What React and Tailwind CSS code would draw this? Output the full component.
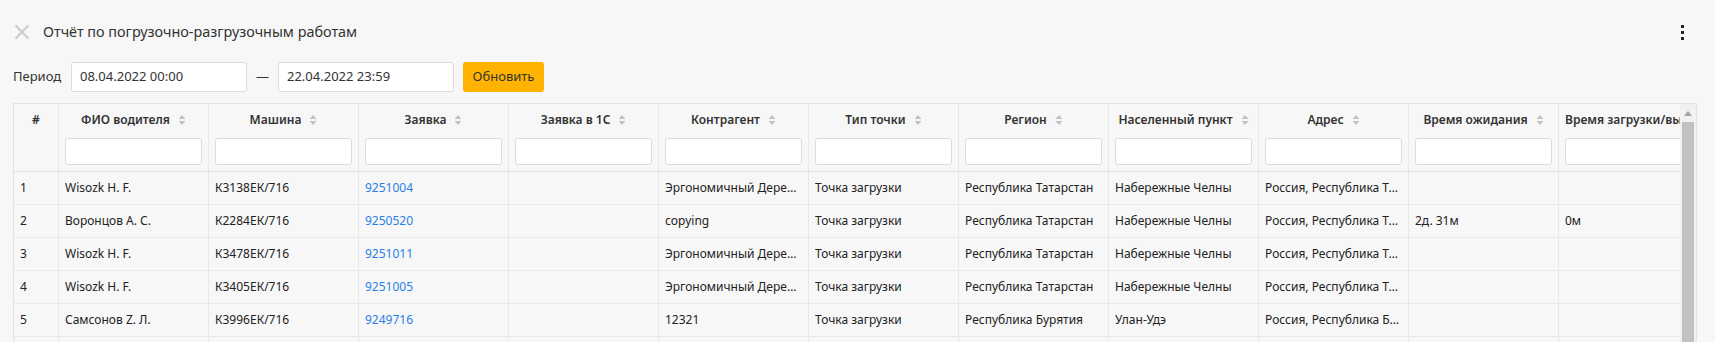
import React from 'react';

const COLUMNS = [
  { title: '#', width: 'w-[45px]', sort: false, filter: false },
  { title: 'ФИО водителя' },
  { title: 'Машина' },
  { title: 'Заявка' },
  { title: 'Заявка в 1С' },
  { title: 'Контрагент' },
  { title: 'Тип точки' },
  { title: 'Регион' },
  { title: 'Населенный пункт' },
  { title: 'Адрес' },
  { title: 'Время ожидания' },
  { title: 'Время загрузки/выгрузки' },
];

const ROWS = [
  ['1', 'Wisozk H. F.', 'К3138ЕК/716', '9251004', '', 'Эргономичный Деревянный Стол', 'Точка загрузки', 'Республика Татарстан', 'Набережные Челны', 'Россия, Республика Татарстан, Набережные Челны', '', ''],
  ['2', 'Воронцов А. С.', 'К2284ЕК/716', '9250520', '', 'copying', 'Точка загрузки', 'Республика Татарстан', 'Набережные Челны', 'Россия, Республика Татарстан, Набережные Челны', '2д. 31м', '0м'],
  ['3', 'Wisozk H. F.', 'К3478ЕК/716', '9251011', '', 'Эргономичный Деревянный Стол', 'Точка загрузки', 'Республика Татарстан', 'Набережные Челны', 'Россия, Республика Татарстан, Набережные Челны', '', ''],
  ['4', 'Wisozk H. F.', 'К3405ЕК/716', '9251005', '', 'Эргономичный Деревянный Стол', 'Точка загрузки', 'Республика Татарстан', 'Набережные Челны', 'Россия, Республика Татарстан, Набережные Челны', '', ''],
  ['5', 'Самсонов Z. Л.', 'К3996ЕК/716', '9249716', '', '12321', 'Точка загрузки', 'Республика Бурятия', 'Улан-Удэ', 'Россия, Республика Бурятия, Улан-Удэ', '', ''],
  ['6', 'Wisozk H. F.', 'К3512ЕК/716', '9251020', '', '12321', 'Точка загрузки', 'Республика Татарстан', 'Набережные Челны', 'Россия, Республика Татарстан, Набережные Челны', '', ''],
];

function SortIcon() {
  return (
    <svg width="8" height="12" viewBox="0 0 8 12" className="ml-[8px] shrink-0">
      <path d="M0.5 5 L4 1 L7.5 5 Z" fill="#c2c2c2" />
      <path d="M0.5 7 L4 11 L7.5 7 Z" fill="#c2c2c2" />
    </svg>
  );
}

function HeaderCell({ col }) {
  const w = col.width || 'w-[150px]';
  return (
    <div className={`${w} shrink-0 border-r border-[#e8e8e8] h-[67px] flex flex-col`}>
      <div className="h-[28px] px-[6px] flex items-center overflow-hidden whitespace-nowrap">
        <div className="w-full text-center whitespace-nowrap">
          <span className="inline-flex items-center font-semibold text-[12px] text-[#333]">
            {col.title}
            {col.sort !== false && <SortIcon />}
          </span>
        </div>
      </div>
      {col.filter !== false && (
        <div className="px-[6px] pt-[6px]">
          <div className="h-[27px] bg-white border border-[#dcdcdc] rounded-[3px]" />
        </div>
      )}
    </div>
  );
}

export default function App() {
  return (
    <div className="w-full h-[342px] overflow-hidden bg-[#f7f7f7] text-[#333] font-['Noto_Sans',sans-serif]">
      {/* заголовок */}
      <div className="h-[62px] pt-[2px] flex items-center justify-between pl-[14px] pr-[31px]">
        <div className="flex items-center">
          <svg width="16" height="16" viewBox="0 0 16 16" className="mr-[13px]">
            <path d="M1.5 1.5 L14.5 14.5 M14.5 1.5 L1.5 14.5" stroke="#cbcbcb" strokeWidth="2" />
          </svg>
          <span className="text-[14.4px] text-[#333]">Отчёт по погрузочно-разгрузочным работам</span>
        </div>
        <div className="flex flex-col gap-[3px] items-center">
          <span className="block w-[3px] h-[3px] bg-[#222]" />
          <span className="block w-[3px] h-[3px] bg-[#222]" />
          <span className="block w-[3px] h-[3px] bg-[#222]" />
        </div>
      </div>

      {/* период */}
      <div className="h-[30px] flex items-center pl-[13px]">
        <span className="w-[58px] text-[13px] text-[#333]">Период</span>
        <div className="w-[176px] h-[30px] bg-white border border-[#dcdcdc] rounded-[3px] flex items-center px-[8px] text-[13px] text-[#333]">
          08.04.2022 00:00
        </div>
        <span className="w-[31px] text-center text-[13px] text-[#333]">—</span>
        <div className="w-[176px] h-[30px] bg-white border border-[#dcdcdc] rounded-[3px] flex items-center px-[8px] text-[13px] text-[#333]">
          22.04.2022 23:59
        </div>
        <button className="ml-[9px] w-[81px] h-[30px] bg-[#ffb300] rounded-[3px] text-[13px] text-[#333]">
          Обновить
        </button>
      </div>

      {/* таблица */}
      <div className="mt-[11px] ml-[13px] mr-[18px] border border-[#e3e3e3] flex">
        <div className="flex-1 min-w-0 overflow-hidden">
          <div className="flex border-b border-[#dfdfdf]">
            {COLUMNS.map((c, i) => (
              <HeaderCell key={i} col={c} />
            ))}
          </div>
          {ROWS.map((r, ri) => (
            <div key={ri} className="flex border-b border-[#e8e8e8] h-[33px]">
              {r.map((v, ci) => (
                <div
                  key={ci}
                  className={`${ci === 0 ? 'w-[45px]' : 'w-[150px]'} shrink-0 border-r border-[#e8e8e8] px-[6px] flex items-center text-[12px] text-[#222] overflow-hidden`}
                >
                  <span className={`min-w-0 truncate ${ci === 3 ? 'text-[#2a7fe8]' : ''}`}>{v}</span>
                </div>
              ))}
            </div>
          ))}
        </div>
        {/* скроллбар */}
        <div className="w-[16px] shrink-0 bg-[#f1f1f1] flex flex-col items-center">
          <svg width="8" height="5" viewBox="0 0 8 5" className="mt-[7px]">
            <path d="M0 5 L4 0 L8 5 Z" fill="#a3a3a3" />
          </svg>
          <div className="mt-[6px] w-[12px] h-[260px] bg-[#c1c1c1]" />
        </div>
      </div>
    </div>
  );
}
